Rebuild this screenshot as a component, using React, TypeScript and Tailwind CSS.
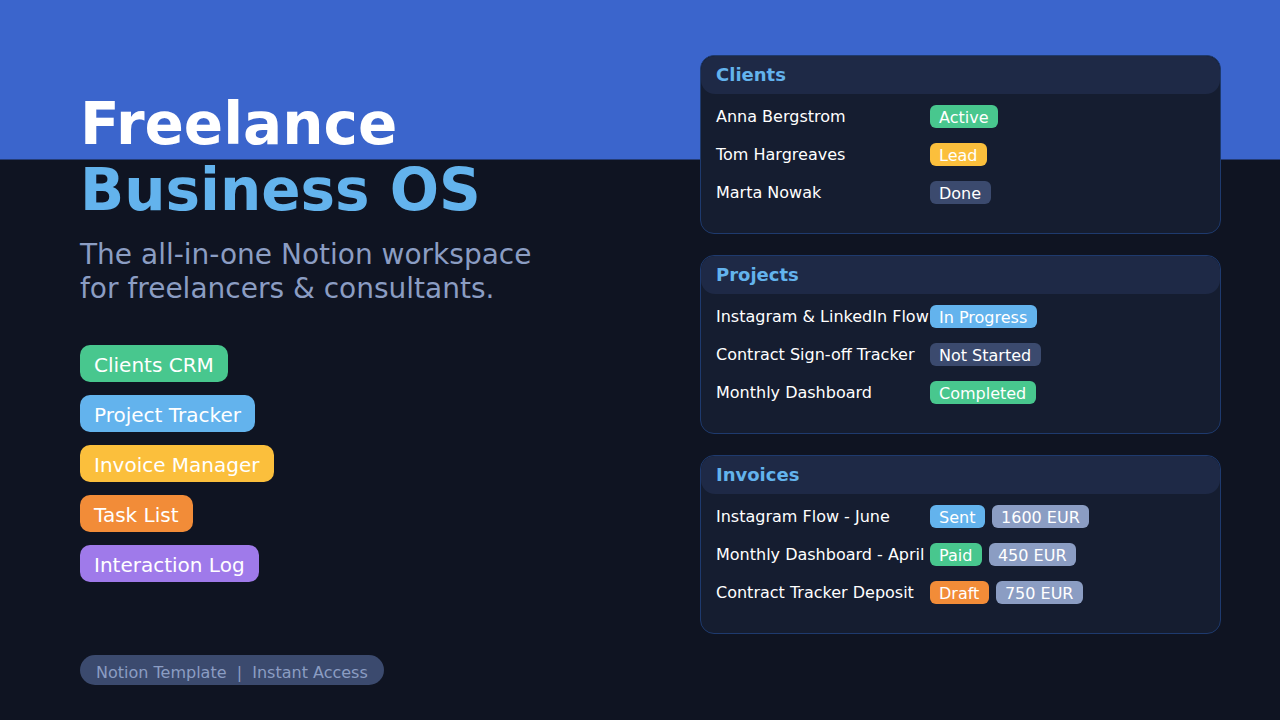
const chips = [
  { label: "Clients CRM", cls: "bg-[#48c78e]" },
  { label: "Project Tracker", cls: "bg-[#63b3ed]" },
  { label: "Invoice Manager", cls: "bg-[#fbbf3c]" },
  { label: "Task List", cls: "bg-[#f28c38]" },
  { label: "Interaction Log", cls: "bg-[#9f7aea]" },
];

const G = "bg-[#48c78e]";
const B = "bg-[#63b3ed]";
const Y = "bg-[#fbbf3c]";
const N = "bg-[#3b4a6e]";
const O = "bg-[#f28c38]";
const S = "bg-[#8b9dc3]";

type Row = { name: string; tags: [string, string][] };
const cards: { title: string; rows: Row[] }[] = [
  {
    title: "Clients",
    rows: [
      { name: "Anna Bergstrom", tags: [["Active", G]] },
      { name: "Tom Hargreaves", tags: [["Lead", Y]] },
      { name: "Marta Nowak", tags: [["Done", N]] },
    ],
  },
  {
    title: "Projects",
    rows: [
      { name: "Instagram & LinkedIn Flow", tags: [["In Progress", B]] },
      { name: "Contract Sign-off Tracker", tags: [["Not Started", N]] },
      { name: "Monthly Dashboard", tags: [["Completed", G]] },
    ],
  },
  {
    title: "Invoices",
    rows: [
      { name: "Instagram Flow - June", tags: [["Sent", B], ["1600 EUR", S]] },
      { name: "Monthly Dashboard - April", tags: [["Paid", G], ["450 EUR", S]] },
      { name: "Contract Tracker Deposit", tags: [["Draft", O], ["750 EUR", S]] },
    ],
  },
];

export default function App() {
  return (
    <div className="w-[1280px] h-[720px] overflow-hidden flex justify-between bg-[linear-gradient(#3b65cc_159px,#0f1422_160px)] font-['DejaVu_Sans',sans-serif] text-white">
      <div className="pl-20 pt-[91px] flex flex-col">
        <h1 className="text-[58px] leading-[66px] font-bold">
          <div>Freelance</div>
          <div className="text-[#63b3ed]">Business OS</div>
        </h1>
        <p className="mt-[15px] text-[28px] leading-[34px] text-[#8b9dc3]">
          The all-in-one Notion workspace
          <br />
          for freelancers &amp; consultants.
        </p>
        <div className="mt-[39px] flex flex-col items-start gap-[13px]">
          {chips.map((c) => (
            <div key={c.label} className={`${c.cls} h-[37px] pl-[14px] pr-[14.5px] rounded-[10px] text-[20px] leading-[41px] whitespace-nowrap`}>
              {c.label}
            </div>
          ))}
        </div>
        <div className="mt-[73px] self-start h-[30px] px-4 rounded-[15px] bg-[#3b4a6e] text-[#8b9dc3] text-[16px] leading-[36px] whitespace-pre">
          Notion Template  |  Instant Access
        </div>
      </div>
      <div className="mr-[59px] pt-[55px] w-[521px] flex flex-col gap-[21px]">
        {cards.map((card) => (
          <section key={card.title} className="h-[179px] rounded-[14px] border border-[#1e3a6e] bg-[#151d30] overflow-hidden">
            <div className="h-[38px] px-[15px] bg-[#1e2946] rounded-[14px] text-[#63b3ed] font-bold text-[18px] leading-[38px]">
              {card.title}
            </div>
            <div className="pt-[11px] pl-[15px] flex flex-col gap-[14px]">
              {card.rows.map((r) => (
                <div key={r.name} className="flex h-[24px] items-start">
                  <div className="w-[214px] shrink-0 text-[16px] leading-[24px] whitespace-nowrap">{r.name}</div>
                  <div className="flex gap-[7px]">
                    {r.tags.map(([t, cls]) => (
                      <span key={t} className={`${cls} h-[23px] pl-[9px] pr-[9.6px] rounded-[6px] text-[16px] leading-[25.5px] whitespace-nowrap`}>
                        {t}
                      </span>
                    ))}
                  </div>
                </div>
              ))}
            </div>
          </section>
        ))}
      </div>
    </div>
  );
}
